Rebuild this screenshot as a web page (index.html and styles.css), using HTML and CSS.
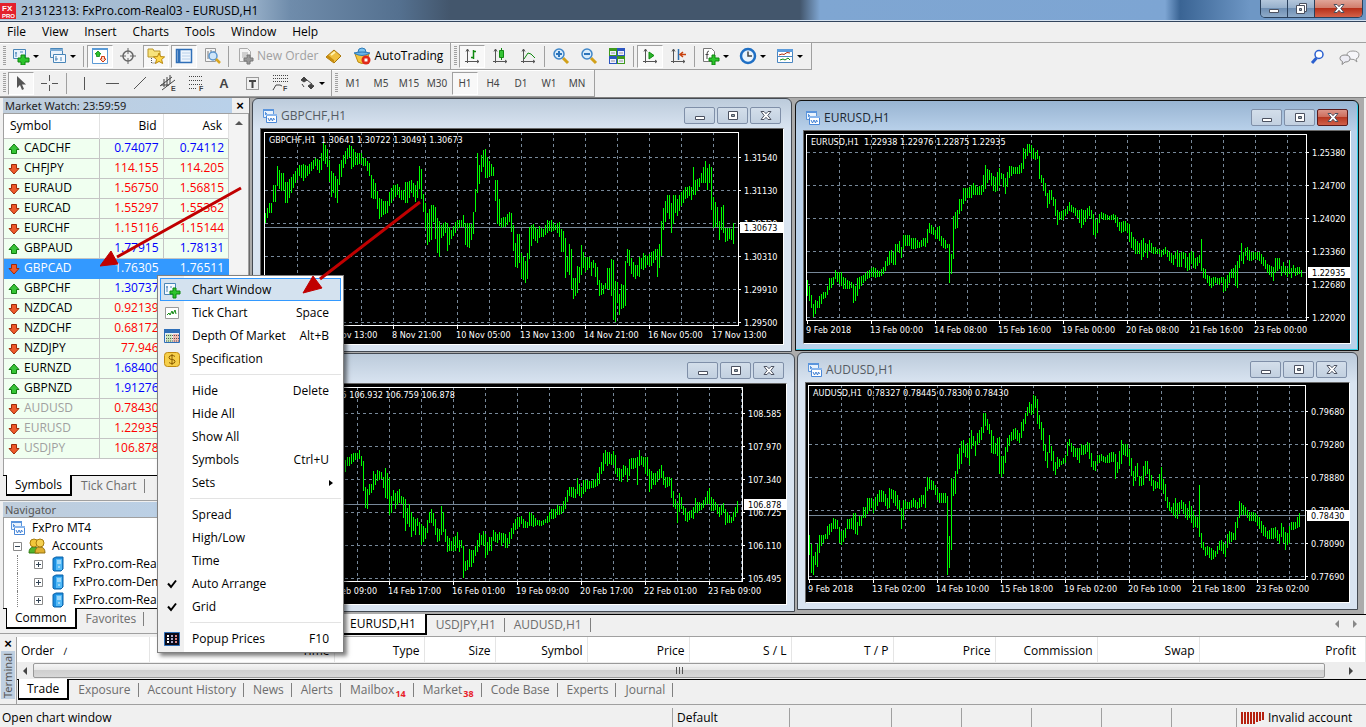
FILE: index.html
```html
<!DOCTYPE html>
<html lang="en">
  <head>
    <meta charset="UTF-8" />
    <title>21312313: FxPro.com-Real03 - EURUSD,H1</title>
    <link rel="stylesheet" href="styles.css">
  </head>
  <body>
    <svg class="sprite" aria-hidden="true">
      <symbol id="up" viewBox="0 0 12 12"><path d="M6 1 11 6.5H8.500V10.500H3.500V6.500H1Z" fill="#35c435" stroke="#117a11"/></symbol>
      <symbol id="down" viewBox="0 0 12 12"><path d="M6 11 11 5.500H8.500V1.500H3.500V5.500H1Z" fill="#ee5a2a" stroke="#a02a08"/></symbol>
      <symbol id="windows" viewBox="0 0 16 16"><path d="M1.500 1.500h10v8h-10z" fill="#eaf3fd" stroke="#5b95dc"/><path d="M1 2h11" stroke="#5b95dc" stroke-width="2"/><path d="M3.500 4v3M3 5.500h2" stroke="#5b95dc"/><path d="M4.500 6.500h10v8h-10z" fill="#fff" stroke="#4a88d8"/><path d="M4 7h11" stroke="#8ab6ec" stroke-width="2"/><path d="m6 10 1.500 3 1.500-3 1.500 3 1-3 1 2" fill="none" stroke="#3f7fd4"/></symbol>
      <symbol id="min" viewBox="0 0 14 12"><path d="M2.500 6.500h9v3h-9z" fill="#fff" stroke="#4b5160"/></symbol>
      <symbol id="max" viewBox="0 0 14 12"><path d="M2.500 1.500h9v8h-9z" fill="#fff" stroke="#4b5160"/><path d="M5.500 4.500h3v2h-3z" fill="#9aa" stroke="#4b5160"/></symbol>
      <symbol id="close" viewBox="0 0 14 12"><path d="M2 1.500h3l2 2.200 2-2.200h3L8.800 5.500 12 9.500H9L7 7.300 5 9.500H2L5.200 5.500Z" fill="#fff" stroke="#4b5160"/></symbol>
      <symbol id="server" viewBox="0 0 16 16"><path d="M3 2.500 6 1h7v12l-2 2H4l-1-1Z" fill="#1c8ee0" stroke="#0b62a8"/><path d="M6 3h6v11H6z" fill="#52b9f6"/><path d="M7 5h4M7 7h4M8 11h2" stroke="#e6f6ff"/></symbol>
      <symbol id="plusbox" viewBox="0 0 9 9"><path d="M.5.5h8v8h-8z" fill="#fff" stroke="#8a8a8a"/><path d="M2 4.500h5M4.500 2v5" stroke="#345"/></symbol>
      <symbol id="plot" viewBox="0 0 18 18"><path d="M4.500 2v14M2 14.500h14M3 4.500 4.500 2 6 4.500M14 13l2 1.500-2 1.500" fill="none" stroke="#555"/></symbol>
      <symbol id="check" viewBox="0 0 10 10"><path d="m1 4.500 3 3.500 5-6.500" fill="none" stroke="#000" stroke-width="2"/></symbol>
    </svg>

    <header class="titlebar">
      <svg class="app-logo" viewBox="0 0 16 16"><path d="M0 0h16v16H0z" fill="#e3202c"/><text x="2" y="8">FX</text><text x="2" y="15" class="logo-small">PRO</text></svg>
      <span class="app-title">21312313: FxPro.com-Real03 - EURUSD,H1</span>
      <div class="caption-buttons">
        <button aria-label="Minimize"><svg><use href="#min"/></svg></button>
        <button aria-label="Restore"><svg viewBox="0 0 14 12"><path d="M5.500.5h7v8h-7z" fill="#fff" stroke="#4b5160"/><path d="M2.500 2.500h8v8h-8z" fill="#fff" stroke="#4b5160"/><path d="M5.500 5.500h2v2h-2z" fill="#9aa" stroke="#4b5160"/></svg></button>
        <button class="close" aria-label="Close"><svg><use href="#close"/></svg></button>
      </div>
    </header>

    <nav class="menubar">
      <a href="#">File</a><a href="#">View</a><a href="#">Insert</a><a href="#">Charts</a><a href="#">Tools</a><a href="#">Window</a><a href="#">Help</a>
    </nav>

    <div class="toolbars">
      <div class="toolbar-row">
        <div class="toolbar">
          <i class="grip"></i>
          <button class="drop" aria-label="New chart"><svg viewBox="0 0 18 18"><path d="M1.500 2.500h12v9h-12z" fill="#e9f2fb" stroke="#4a86b8"/><path d="M4 5v5M3 6h2M8 5h3" stroke="#4a86b8"/><path d="M9 8h4v3h4v4h-4v3H9v-3H6v-4h3Z" fill="#2cc42c" stroke="#0d860d"/></svg></button>
          <button class="drop" aria-label="Profiles"><svg viewBox="0 0 18 18"><path d="M1.500 1.500h12v9h-12z" fill="#e9f2fb" stroke="#4a86b8"/><path d="M1 3h13" stroke="#7bacd6" stroke-width="2"/><path d="M4.500 7.500h12v8h-12z" fill="#f4f9ff" stroke="#4a86b8"/><path d="M7 9v5M6 12h3M12 10v4" stroke="#4a86b8"/></svg></button>
          <i class="sep"></i>
          <button class="on" aria-label="Market watch"><svg viewBox="0 0 18 18"><path d="M1.500 1.500h15v15h-15z" fill="#fff" stroke="#5a9ad6"/><path d="M1 2h16" stroke="#5a9ad6" stroke-width="2"/><path d="m7 4 3 3H8.500v2.500h-3V7H4Z" fill="#2cc42c" stroke="#0d860d" stroke-width=".8"/><path d="m12 15 3-3h-1.500V9.500h-3V12H9Z" fill="#fbd4c4" stroke="#d03c10"/></svg></button>
          <button aria-label="Data window"><svg viewBox="0 0 18 18"><circle cx="9" cy="9" r="5" fill="none" stroke="#666" stroke-width="1.500"/><path d="M9 1v6M9 11v6M1 9h6M11 9h6" stroke="#666"/></svg></button>
          <button class="on" aria-label="Navigator"><svg viewBox="0 0 18 18"><path d="M1 3V2h5l1 2h6v6H1z" fill="#f7e37c" stroke="#b9962a"/><path d="M4.500 11v5h4" stroke="#555" stroke-dasharray="1 1" fill="none"/><path d="m12 6 1.600 3.600 4 .3-3 2.600 1 4-3.600-2.100L8.500 16.500l1-4-3-2.600 4-.3Z" fill="#ffd84a" stroke="#b8860b"/></svg></button>
          <button class="on" aria-label="Terminal"><svg viewBox="0 0 18 18"><path d="M1.500 2.500h15v13h-15z" fill="#eef5fd" stroke="#2f6fb8" stroke-width="1.500"/><path d="M4 3v12" stroke="#2f6fb8" stroke-width="3"/><path d="M7 6h8M7 9h8M7 12h8" stroke="#b9d0ea"/></svg></button>
          <button aria-label="Strategy tester"><svg viewBox="0 0 18 18"><path d="M2.500 1.500h10v13h-10z" fill="#f5f5f5" stroke="#999"/><path d="M5 4v8M8 3v8M11 4v5" stroke="#777"/><circle cx="10" cy="9" r="4" fill="#cfe6fa" stroke="#5d97cf" stroke-width="1.500"/><path d="m13 12 4 4" stroke="#d9a520" stroke-width="2.500"/></svg></button>
          <i class="sep"></i>
          <button class="wide muted"><svg viewBox="0 0 18 18"><path d="M2.500 1.500h8l3 3v10h-11z" fill="#f4f4f4" stroke="#aaa"/><path d="M5 6h6M5 8h6M5 10h4" stroke="#aaa"/><path d="M10 8h3v3h3v3h-3v3h-3v-3H7v-3h3Z" fill="#999" stroke="#777"/></svg>New Order</button>
          <button aria-label="MetaEditor"><svg viewBox="0 0 18 18"><path d="m2 10 8-7 7 6-7 7Z" fill="#f0c040" stroke="#a87408"/><path d="m2 10 8 6v-3L4 8Z" fill="#c88d10"/><path d="m7 8 4-3" stroke="#fff3b0" stroke-width="2"/></svg></button>
          <button class="wide auto"><svg viewBox="0 0 18 18"><path d="M2 7 5 15q4 3 8 0l3-8Z" fill="#f4c63c" stroke="#bb8a14"/><path d="M1 6q8-3 16 0-8 5-16 0Z" fill="#69b4e8" stroke="#2e7bb8"/><path d="M5 5q0-4 4-4t4 4Z" fill="#7cc3f0" stroke="#2e7bb8"/><circle cx="13" cy="13" r="4.500" fill="#e02a1a"/><path d="M11.500 11.500h3v3h-3z" fill="#fff"/></svg>AutoTrading</button>
        </div>
        <div class="toolbar">
          <i class="grip"></i>
          <button class="on" aria-label="Bar chart"><svg viewBox="0 0 18 18"><use href="#plot"/><path d="M10.500 3v9M8 10.500h2M11 4.500h2" stroke="#118a11" stroke-width="1.500"/></svg></button>
          <button aria-label="Candlesticks"><svg viewBox="0 0 18 18"><use href="#plot"/><path d="M10.500 1v12" stroke="#118a11"/><path d="M8.500 3.500h4v7h-4z" fill="#35c435" stroke="#118a11"/></svg></button>
          <button aria-label="Line chart"><svg viewBox="0 0 18 18"><use href="#plot"/><path d="m5 12 4-6 3 1 4 4" fill="none" stroke="#118a11"/></svg></button>
          <i class="sep"></i>
          <button aria-label="Zoom in"><svg viewBox="0 0 18 18"><path d="m11 11 5 5" stroke="#d2a11a" stroke-width="3"/><circle cx="7" cy="7" r="5" fill="#d8ecfb" stroke="#3f86c8" stroke-width="1.500"/><path d="M4 7h6M7 4v6" stroke="#2d74ba" stroke-width="2"/></svg></button>
          <button aria-label="Zoom out"><svg viewBox="0 0 18 18"><path d="m11 11 5 5" stroke="#d2a11a" stroke-width="3"/><circle cx="7" cy="7" r="5" fill="#d8ecfb" stroke="#3f86c8" stroke-width="1.500"/><path d="M4 7h6" stroke="#2d74ba" stroke-width="2"/></svg></button>
          <button aria-label="Tile windows"><svg viewBox="0 0 18 18"><path d="M1 1h8v8H1zM9 9h8v8H9z" fill="#3f9a1c"/><path d="M9 1h8v8H9zM1 9h8v8H1z" fill="#2b55c0"/><path d="M2 4h6v4H2zM10 4h6v4h-6zM2 12h6v4H2zM10 12h6v4h-6z" fill="#eef"/><path d="M3 6h4M11 6h4M3 14h4M11 14h4" stroke="#999"/></svg></button>
          <i class="sep"></i>
          <button class="on" aria-label="Auto scroll"><svg viewBox="0 0 18 18"><use href="#plot"/><path d="m8 5 5 3.500L8 12Z" fill="#2ab52a" stroke="#118a11"/></svg></button>
          <button aria-label="Chart shift"><svg viewBox="0 0 18 18"><use href="#plot"/><path d="M9.500 2v11" stroke="#2d6fae" stroke-width="1.500"/><path d="M17 7.500h-5M14 5l-3 2.500L14 10" fill="none" stroke="#c8400c" stroke-width="1.500"/></svg></button>
          <i class="sep"></i>
          <button class="drop" aria-label="Indicators"><svg viewBox="0 0 18 18"><path d="M1.500 1.500h8l3 3v10h-11z" fill="#fff" stroke="#777"/><path d="M7 4q-2 0-2 3v5M3.500 7.500h3" stroke="#444" fill="none"/><path d="M10 8h3v3h4v3h-4v4h-3v-4H7v-3h3Z" fill="#2cc42c" stroke="#0d860d"/></svg></button>
          <button class="drop" aria-label="Periods"><svg viewBox="0 0 18 18"><circle cx="9" cy="9" r="7" fill="#eaf4fd" stroke="#1f6fc4" stroke-width="2.500"/><path d="M9 4.500V9h4" fill="none" stroke="#444" stroke-width="1.500"/></svg></button>
          <button class="drop" aria-label="Templates"><svg viewBox="0 0 18 18"><path d="M1.500 2.500h15v13h-15z" fill="#fff" stroke="#4a86c0"/><path d="M1 3.500h16" stroke="#5c9cdc" stroke-width="3"/><path d="M2 9.500h14" stroke="#4a86c0"/><path d="m3 8 3-1 2 .5 3-2 3 .5" fill="none" stroke="#b03010"/><path d="m4 13 3-1 2 1 3-2 2 2" fill="none" stroke="#118a11"/></svg></button>
        </div>
        <div class="search-tools">
          <button aria-label="Search"><svg viewBox="0 0 18 18"><path d="m3 15 4.500-5" stroke="#2a5fcf" stroke-width="3"/><circle cx="10" cy="6.500" r="4" fill="#fff" stroke="#2a5fcf" stroke-width="1.500"/></svg></button>
          <button aria-label="Chat"><svg class="chat" viewBox="0 0 22 18"><path d="M14 3q6 0 6 4 0 3-3 4l1 3-3-2.500q-7 0-7-4.500 0-4 6-4Z" fill="#f6f6fa" stroke="#999"/><path d="M6 7q5 0 5 3.500T6 14l-3 2.500.5-3Q1 12.500 1 10.500 1 7 6 7Z" fill="#ececf4" stroke="#888"/></svg></button>
        </div>
      </div>
      <div class="toolbar-row">
        <div class="toolbar drawing">
          <i class="grip"></i>
          <button class="on" aria-label="Cursor"><svg viewBox="0 0 18 18"><path d="M5 2v12l3-3 2 5 2-1-2-4.500h4Z" fill="#555"/></svg></button>
          <button aria-label="Crosshair"><svg viewBox="0 0 18 18"><path d="M9.500 1v6M9.500 11v6M1 9.500h6M12 9.500h6" stroke="#555"/></svg></button>
          <i class="sep"></i>
          <button aria-label="Vertical line"><svg viewBox="0 0 18 18"><path d="M9.500 3v13" stroke="#555"/></svg></button>
          <button aria-label="Horizontal line"><svg viewBox="0 0 18 18"><path d="M3 9.500h13" stroke="#555"/></svg></button>
          <button aria-label="Trendline"><svg viewBox="0 0 18 18"><path d="M3 15 15 3" stroke="#555"/></svg></button>
          <button aria-label="Channel"><svg viewBox="0 0 18 18"><path d="m1 12 12-9M3 16 16 6M5 5v8M8 3v9M11 1v9M2 11h8" stroke="#444" fill="none"/><text x="12" y="17">E</text></svg></button>
          <button aria-label="Fibonacci"><svg viewBox="0 0 18 18"><path d="M2 2.500h14M2 6.500h14M2 10.500h14M2 14.500h8" stroke="#444" stroke-dasharray="1 1"/><text x="12" y="17">F</text></svg></button>
          <button class="letter">A</button>
          <button aria-label="Text label"><svg viewBox="0 0 18 18"><path d="M3.500 3.500h12v12h-12z" fill="none" stroke="#444" stroke-dasharray="1 1"/><path d="M6 7h7M9.500 7v7" stroke="#444" stroke-width="2"/></svg></button>
          <button aria-label="Fibonacci arcs"><svg viewBox="0 0 18 18"><path d="M2 1.500h15M2 4.500h15M2 7.500h15" stroke="#444" stroke-dasharray="1 1"/><path d="m2 16 3-5h4l2 1" stroke="#444" fill="none"/><text x="12" y="17">F</text></svg></button>
          <button class="drop" aria-label="Arrows"><svg viewBox="0 0 18 18"><path d="m6 3 3 3-3 2-3-2ZM13 10l3 2-3 3-3-3Z" fill="#444" stroke="#444"/><path d="m4 10 2 3M9 6l5 4" stroke="#444"/></svg></button>
        </div>
        <div class="toolbar periods">
          <i class="grip"></i>
          <button>M1</button><button>M5</button><button>M15</button><button>M30</button><button class="on">H1</button><button>H4</button><button>D1</button><button>W1</button><button>MN</button>
        </div>
      </div>
    </div>

    <div class="main">
      <aside class="sidebar">
        <section class="panel market">
          <div class="panel-head"><h2>Market Watch: 23:59:59</h2><button aria-label="Close">×</button></div>
          <div class="market-body">
            <table class="quotes">
              <thead><tr><th>Symbol</th><th>Bid</th><th>Ask</th></tr></thead>
              <tbody>
                <tr class="rise"><td><svg><use href="#up"/></svg>CADCHF</td><td>0.74077</td><td>0.74112</td></tr>
                <tr><td><svg><use href="#down"/></svg>CHFJPY</td><td>114.155</td><td>114.205</td></tr>
                <tr><td><svg><use href="#down"/></svg>EURAUD</td><td>1.56750</td><td>1.56815</td></tr>
                <tr><td><svg><use href="#down"/></svg>EURCAD</td><td>1.55297</td><td>1.55362</td></tr>
                <tr><td><svg><use href="#down"/></svg>EURCHF</td><td>1.15116</td><td>1.15144</td></tr>
                <tr class="rise"><td><svg><use href="#up"/></svg>GBPAUD</td><td>1.77915</td><td>1.78131</td></tr>
                <tr class="selected"><td><svg><use href="#down"/></svg>GBPCAD</td><td>1.76305</td><td>1.76511</td></tr>
                <tr class="rise"><td><svg><use href="#up"/></svg>GBPCHF</td><td>1.30737</td><td></td></tr>
                <tr><td><svg><use href="#down"/></svg>NZDCAD</td><td>0.92139</td><td></td></tr>
                <tr><td><svg><use href="#down"/></svg>NZDCHF</td><td>0.68172</td><td></td></tr>
                <tr><td><svg><use href="#down"/></svg>NZDJPY</td><td>77.946</td><td></td></tr>
                <tr class="rise"><td><svg><use href="#up"/></svg>EURNZD</td><td>1.68400</td><td></td></tr>
                <tr class="rise"><td><svg><use href="#up"/></svg>GBPNZD</td><td>1.91276</td><td></td></tr>
                <tr class="off"><td><svg><use href="#down"/></svg>AUDUSD</td><td>0.78430</td><td></td></tr>
                <tr class="off"><td><svg><use href="#down"/></svg>EURUSD</td><td>1.22935</td><td></td></tr>
                <tr class="off"><td><svg><use href="#down"/></svg>USDJPY</td><td>106.878</td><td></td></tr>
              </tbody>
            </table>
            <div class="scroll-strip"><svg viewBox="0 0 8 5"><path d="M0 5 4 1l4 4Z" fill="#555"/></svg></div>
          </div>
          <div class="tabs"><button class="active">Symbols</button><button>Tick Chart</button></div>
        </section>
        <section class="panel navigator">
          <div class="panel-head"><h2>Navigator</h2><button aria-label="Close">×</button></div>
          <ul class="tree">
            <li><svg><use href="#windows"/></svg>FxPro MT4</li>
            <li class="level1"><svg class="box" viewBox="0 0 9 9"><path d="M.5.5h8v8h-8z" fill="#fff" stroke="#8a8a8a"/><path d="M2 4.500h5" stroke="#345"/></svg><svg class="people" viewBox="0 0 18 16"><path d="M1 15q0-6 5-6 5 0 5 6Z" fill="#53b42c" stroke="#2d7a12"/><circle cx="6" cy="5" r="4" fill="#f0c63a" stroke="#a87c0c"/><path d="M7 15q0-6 5-6 5 0 5 6Z" fill="#e0b030" stroke="#94700c"/><circle cx="12" cy="5" r="4" fill="#f4d050" stroke="#a87c0c"/></svg>Accounts</li>
            <li class="level2"><svg class="box"><use href="#plusbox"/></svg><svg><use href="#server"/></svg>FxPro.com-Real03</li>
            <li class="level2"><svg class="box"><use href="#plusbox"/></svg><svg><use href="#server"/></svg>FxPro.com-Demo03</li>
            <li class="level2"><svg class="box"><use href="#plusbox"/></svg><svg><use href="#server"/></svg>FxPro.com-Real04</li>
          </ul>
          <div class="tabs"><button class="active">Common</button><button>Favorites</button></div>
        </section>
      </aside>

      <main class="workspace">
        <div class="desktop">
          <article class="window gbpchf">
            <div class="window-title"><svg class="doc"><use href="#windows"/></svg><span>GBPCHF,H1</span><button aria-label="Minimize"><svg><use href="#min"/></svg></button><button aria-label="Maximize"><svg><use href="#max"/></svg></button><button aria-label="Close"><svg><use href="#close"/></svg></button></div>
            <svg class="chart" id="gbpchf"></svg>
          </article>
          <article class="window usdjpy">
            <div class="window-title"><svg class="doc"><use href="#windows"/></svg><span>USDJPY,H1</span><button aria-label="Minimize"><svg><use href="#min"/></svg></button><button aria-label="Maximize"><svg><use href="#max"/></svg></button><button aria-label="Close"><svg><use href="#close"/></svg></button></div>
            <svg class="chart" id="usdjpy"></svg>
          </article>
          <article class="window audusd">
            <div class="window-title"><svg class="doc"><use href="#windows"/></svg><span>AUDUSD,H1</span><button aria-label="Minimize"><svg><use href="#min"/></svg></button><button aria-label="Maximize"><svg><use href="#max"/></svg></button><button aria-label="Close"><svg><use href="#close"/></svg></button></div>
            <svg class="chart" id="audusd"></svg>
          </article>
          <article class="window eurusd focused">
            <div class="window-title"><svg class="doc"><use href="#windows"/></svg><span>EURUSD,H1</span><button aria-label="Minimize"><svg><use href="#min"/></svg></button><button aria-label="Maximize"><svg><use href="#max"/></svg></button><button class="close" aria-label="Close"><svg><use href="#close"/></svg></button></div>
            <svg class="chart" id="eurusd"></svg>
          </article>
        </div>
        <div class="tabs chart-tabs">
          <button>GBPCHF,H1</button><button class="active">EURUSD,H1</button><button>USDJPY,H1</button><button>AUDUSD,H1</button>
          <svg class="tab-arrows" viewBox="0 0 24 8"><path d="M5 0v8L1 4ZM19 0v8l4-4Z" fill="#888"/></svg>
        </div>
      </main>
    </div>

    <section class="terminal">
      <div class="terminal-side"><button aria-label="Close">×</button><h2>Terminal</h2></div>
      <div class="terminal-body">
        <table class="orders">
          <colgroup><col class="c-order"><col class="c-time"><col class="c-type"><col class="c-size"><col class="c-symbol"><col class="c-price"><col class="c-price"><col class="c-price"><col class="c-price"><col class="c-price"><col class="c-price"><col></colgroup>
          <thead><tr><th>Order &nbsp; <small>∕</small></th><th>Time</th><th>Type</th><th>Size</th><th>Symbol</th><th>Price</th><th>S / L</th><th>T / P</th><th>Price</th><th>Commission</th><th>Swap</th><th>Profit</th></tr></thead>
        </table>
        <div class="hscroll">
          <svg viewBox="0 0 5 8"><path d="M5 0v8L1 4Z" fill="#444"/></svg>
          <div class="thumb"><i></i><i></i><i></i></div>
          <svg viewBox="0 0 5 8"><path d="M0 0v8l4-4Z" fill="#444"/></svg>
        </div>
        <div class="tabs">
          <button class="active">Trade</button><button>Exposure</button><button>Account History</button><button>News</button><button>Alerts</button><button>Mailbox<b>14</b></button><button>Market<b>38</b></button><button>Code Base</button><button>Experts</button><button>Journal</button>
        </div>
      </div>
    </section>

    <footer class="statusbar">
      <span class="hint">Open chart window</span>
      <span class="profile">Default</span>
      <span class="s1"></span><span class="s2"></span><span class="s2"></span><span class="s2"></span><span class="s2"></span><span class="s3"></span>
      <span class="account"><svg viewBox="0 0 24 13"><path d="M1 1v12M4 1v12M7 1v12M10 1v12M13 1v12M16 1v10M19 1v9M22 1v8" stroke="#b5210f" stroke-width="2"/></svg>Invalid account</span>
    </footer>

    <div class="context-menu" role="menu">
      <button class="hot"><i><svg viewBox="0 0 18 18"><path d="M1.500 2.500h11v11h-11z" fill="#f4f9ff" stroke="#4a86b8"/><path d="M4 5v6M3 6h2M8 5v2" stroke="#4a86b8"/><path d="M10 7h3v3h4v3h-4v4h-3v-4H7v-3h3Z" fill="#2cc42c" stroke="#0d860d"/></svg></i>Chart Window</button>
      <button><i><svg viewBox="0 0 18 18"><path d="M2.500 3.500h13v11h-13z" fill="#fff" stroke="#999"/><path d="m4 11 2-2 1 2 2-4 1 3 2-4 1 4" fill="none" stroke="#118a11"/></svg></i>Tick Chart<kbd>Space</kbd></button>
      <button><i><svg viewBox="0 0 18 18"><path d="M1.500 2.500h15v13h-15z" fill="#e8eef8" stroke="#2f6fb8"/><path d="M1 4h16" stroke="#2f6fb8" stroke-width="4"/><path d="M3 7h6v8H3z" fill="#c8e6b8"/><path d="M10 7h6v8h-6z" fill="#f0b8b0"/><path d="M3 8.500h13M3 11.500h13M3 14h13" stroke="#555" stroke-dasharray="1 1"/></svg></i>Depth Of Market<kbd>Alt+B</kbd></button>
      <button><i><svg viewBox="0 0 18 18"><rect x="1.500" y="2.500" width="15" height="14" rx="3" fill="#f6cf4a" stroke="#c08a10"/><path d="M12 6.500q-1-1-3-1-3 0-3 2t3 2q3 0 3 2t-3 2q-2 0-3-1M9 4v11" fill="none" stroke="#8a5c00"/></svg></i>Specification</button>
      <hr>
      <button><i></i>Hide<kbd>Delete</kbd></button>
      <button><i></i>Hide All</button>
      <button><i></i>Show All</button>
      <button><i></i>Symbols<kbd>Ctrl+U</kbd></button>
      <button><i></i>Sets<svg class="more" viewBox="0 0 4 6"><path d="M0 0v6l4-3Z"/></svg></button>
      <hr>
      <button><i></i>Spread</button>
      <button><i></i>High/Low</button>
      <button><i></i>Time</button>
      <button><i><svg class="tick"><use href="#check"/></svg></i>Auto Arrange</button>
      <button><i><svg class="tick"><use href="#check"/></svg></i>Grid</button>
      <hr>
      <button><i><svg viewBox="0 0 18 18"><path d="M1.500 2.500h15v13h-15z" fill="#0a0a18" stroke="#2f6fb8"/><path d="M5 5v9" stroke="#fff" stroke-width="2" stroke-dasharray="2 1"/><path d="M9 5v9" stroke="#aac" stroke-width="2" stroke-dasharray="2 1"/><path d="M13 5v9" stroke="#d88" stroke-width="2" stroke-dasharray="2 1"/></svg></i>Popup Prices<kbd>F10</kbd></button>
    </div>

    <svg class="callouts" viewBox="0 0 330 120">
      <path d="M141 10 17 79M320 24 220 101" stroke="#c00000" stroke-width="3"/>
      <path d="m0 88 11-15 7 13ZM203 115l10-17 9 12Z" fill="#c00000" stroke="#c00000"/>
    </svg>

    <script src="charts.js"></script>
  </body>
</html>
```
FILE: styles.css
```css
* {
  box-sizing: border-box;
}

body {
  margin: 0;
  height: 100vh;
  display: flex;
  flex-direction: column;
  position: relative;
  overflow: hidden;
  background: #f0f0f0;
  color: #000;
  font-family: "Open Sans", "Segoe UI", sans-serif;
  font-size: 12px;
  line-height: 16px;
}

button {
  padding: 0;
  border: 0;
  background: none;
  color: inherit;
  font: inherit;
}

h2 {
  margin: 0;
  font: 11px "Noto Sans", Tahoma, sans-serif;
}

svg {
  flex: none;
}

.sprite {
  position: absolute;
  width: 0;
  height: 0;
}

/* title bar */
.titlebar {
  height: 22px;
  display: flex;
  align-items: center;
  border-bottom: 1px solid #33445c;
  box-shadow: inset 0 -1px #d5e2f0;
  background: linear-gradient(90deg, #a9bfd4 0, #a3bad1 240px, #6f8cab 290px, #54708f 400px, #43566c 450px, #43566c 800px, #7fa6d2 820px, #7da5d3 1165px, #3a6494 1180px, #6e97c5 1250px);
}

.app-logo {
  width: 16px;
  height: 16px;
}

.app-logo text {
  font: 700 8px "Liberation Sans", sans-serif;
  fill: #fff;
}

.app-logo .logo-small {
  font-size: 6px;
}

.app-title {
  margin-left: 5px;
}

.caption-buttons {
  display: flex;
  align-self: flex-start;
  height: 18px;
  margin-left: auto;
  margin-right: 3px;
  border: 1px solid #29405c;
  border-top: 0;
  border-radius: 0 0 5px 5px;
  overflow: hidden;
}

.caption-buttons button {
  width: 27px;
  display: flex;
  align-items: center;
  justify-content: center;
  border-right: 1px solid #29405c;
  background: linear-gradient(#b4c7dc, #94aeca 50%, #6f8fb3 50%, #8fabc9);
}

.caption-buttons .close {
  width: 47px;
  border-right: 0;
  background: linear-gradient(#e0a598, #d07a68 50%, #b7301a 50%, #d4624a);
}

.caption-buttons svg,
.window-title button svg {
  width: 14px;
  height: 12px;
}

/* menu */
.menubar {
  height: 21px;
  display: flex;
  align-items: center;
  gap: 16px;
  padding-left: 7px;
  border-bottom: 1px solid #a0a0a0;
}

.menubar a {
  color: #000;
  text-decoration: none;
}

/* toolbars */
.toolbars {
  border-bottom: 1px solid #808080;
}

.toolbar-row {
  height: 27px;
  display: flex;
}

.toolbar {
  display: flex;
  align-items: center;
  padding: 0 3px;
  border-right: 1px solid #a0a0a0;
  border-bottom: 1px solid #a0a0a0;
  box-shadow: inset 0 1px #fff;
}

.grip {
  width: 3px;
  height: 20px;
  margin-right: 1px;
  background: repeating-linear-gradient(#a0a0a0 0 1px, #f0f0f0 1px 2px);
}

.sep {
  width: 1px;
  height: 21px;
  margin: 0 2px;
  background: #a0a0a0;
}

.drawing .sep {
  margin: 0 3px;
}

.toolbar button {
  width: 26px;
  height: 23px;
  margin: 0 1px;
  display: flex;
  align-items: center;
  justify-content: center;
  color: #444;
}

.toolbar svg,
.search-tools svg {
  width: 18px;
  height: 18px;
}

.toolbar svg text {
  font: 700 7px "Liberation Sans", sans-serif;
  fill: #444;
}

.toolbar .on {
  border: 1px solid;
  border-color: #a0a0a0 #fff #fff #a0a0a0;
  background: #f8f8f8;
}

.toolbar .drop {
  width: 35px;
  gap: 3px;
}

.drawing .drop {
  width: 32px;
}

.drop::after {
  content: "";
  border: 3px solid transparent;
  border-top-color: #000;
  border-bottom: 0;
}

.toolbar .wide {
  width: auto;
  padding-left: 5px;
  gap: 2px;
}

.toolbar .muted {
  color: #a0a0a0;
}

.toolbar .auto {
  color: #000;
  gap: 3px;
  padding-right: 3px;
}

.toolbar .letter {
  font: 700 13px "Liberation Sans", sans-serif;
}

.periods button {
  font: 10px "Noto Sans", Tahoma, sans-serif;
}

.search-tools {
  display: flex;
  align-items: center;
  gap: 12px;
  margin-left: auto;
  padding-right: 5px;
}

.search-tools button {
  height: 18px;
}

.search-tools .chat {
  width: 22px;
}

/* side panels */
.main {
  flex: 1;
  min-height: 0;
  display: flex;
}

.sidebar {
  width: 249px;
  display: flex;
  flex-direction: column;
  padding-bottom: 3px;
}

.panel {
  display: flex;
  flex-direction: column;
  padding-left: 3px;
  border-bottom: 1px solid #a0a0a0;
}

.market {
  height: 403px;
}

.navigator {
  flex: 1;
  min-height: 0;
  padding-top: 1px;
}

.panel-head {
  display: flex;
  justify-content: space-between;
  padding-right: 3px;
}

.panel-head h2 {
  width: 229px;
  height: 15px;
  padding-left: 2px;
  line-height: 15px;
  background: linear-gradient(90deg, #bfcddb, #b9d1ea);
  color: #222;
}

.navigator h2 {
  color: #555;
}

.panel-head button,
.terminal-side button {
  width: 12px;
  font: 700 13px/14px "Liberation Sans", sans-serif;
}

.market-body {
  flex: 1;
  min-height: 0;
  display: flex;
  border: 1px solid #a0a0a0;
  border-bottom: 0;
  background: #fff;
}

.quotes {
  width: 225px;
  align-self: flex-start;
  table-layout: fixed;
  border-collapse: collapse;
}

.quotes th {
  height: 24px;
  padding: 0 6px;
  border-right: 1px solid #e2e2e2;
  font-weight: 400;
  text-align: right;
}

.quotes th:first-child {
  width: 95px;
  text-align: left;
}

.quotes th:nth-child(2) {
  width: 64px;
}

.quotes td {
  height: 20px;
  padding: 0 4px;
  border: 1px solid #c4c4c4;
  border-left: 0;
  background: #f0fff0;
  color: #f00;
  text-align: right;
  line-height: 18px;
}

.quotes td:first-child {
  color: #000;
  text-align: left;
}

.quotes td svg {
  width: 12px;
  height: 12px;
  margin-right: 4px;
  vertical-align: -3px;
}

.quotes .rise td + td {
  color: #00f;
}

.quotes .off td:first-child {
  color: #a0a0a0;
}

.quotes .selected td,
.quotes .selected td:first-child {
  border-color: #3399ff;
  background: #3399ff;
  color: #fff;
}

.scroll-strip {
  flex: 1;
  padding-top: 6px;
  background: #f3f3f3;
  text-align: center;
}

.scroll-strip svg {
  width: 8px;
  height: 5px;
  display: block;
  margin: 0 auto;
}

.tabs {
  height: 25px;
  flex: none;
  display: flex;
  align-items: flex-start;
  padding-left: 3px;
  border-top: 1px solid #000;
  background: #f0f0f0;
  color: #6d6d6d;
}

.tabs button {
  height: 20px;
  padding: 0 8px 0 9px;
  position: relative;
}

.tabs button::after {
  content: "";
  position: absolute;
  right: 0;
  top: 3px;
  height: 14px;
  border-right: 1px solid #808080;
}

.tabs .active {
  margin-top: -1px;
  height: 21px;
  padding-left: 8px;
  border: 1px solid #000;
  border-top: 0;
  border-right-width: 2px;
  border-bottom-width: 2px;
  background: #fff;
  color: #000;
}

.tabs .active::after {
  display: none;
}

.tree {
  flex: 1;
  min-height: 0;
  margin: 0;
  padding: 1px 6px 0;
  border: 1px solid #a0a0a0;
  border-bottom: 0;
  background: #fff;
  list-style: none;
  overflow: hidden;
  white-space: nowrap;
}

.tree li {
  height: 18px;
  display: flex;
  align-items: center;
  gap: 6px;
}

.tree svg {
  width: 16px;
  height: 16px;
}

.tree .box {
  width: 9px;
  height: 9px;
}

.tree .people {
  width: 18px;
}

.tree .level1 {
  padding-left: 3px;
}

.tree .level2 {
  margin-left: 7px;
  padding-left: 16px;
  gap: 7px;
  border-left: 1px dotted #808080;
}

/* chart windows */
.workspace {
  flex: 1;
  min-width: 0;
  display: flex;
  flex-direction: column;
}

.desktop {
  flex: 1;
  position: relative;
  overflow: hidden;
  border-left: 1px solid #696969;
  border-right: 2px solid #f0f0f0;
  background: #ababab;
}

.window {
  position: absolute;
  display: flex;
  flex-direction: column;
  padding: 0 7px 6px;
  border: 1px solid #444a52;
  border-radius: 6px 6px 0 0;
  background: linear-gradient(#bccbdb, #d9e4f1 30px);
}

.window.focused {
  border-color: #111;
  box-shadow: inset -1px -1px #2fd0e8;
  background: linear-gradient(#98b4d2, #b9d1ea 30px);
}

.gbpchf { left: 2px; top: 0; width: 540px; height: 254px; }
.usdjpy { left: 2px; top: 255px; width: 543px; height: 259px; }
.eurusd { left: 545px; top: 2px; width: 564px; height: 251px; }
.audusd { left: 547px; top: 254px; width: 561px; height: 258px; }

.window-title {
  height: 29px;
  display: flex;
  align-items: center;
  gap: 2px;
  padding: 4px 3px 0 2px;
  color: #555b63;
}

.focused .window-title {
  color: #1c2733;
}

.window-title .doc {
  width: 16px;
  height: 16px;
}

.window-title span {
  flex: 1;
  padding-left: 1px;
}

.window-title button {
  width: 31px;
  height: 17px;
  display: flex;
  align-items: center;
  justify-content: center;
  border: 1px solid #7f8fa8;
  border-radius: 2px;
  background: linear-gradient(#d3deea, #c2d0e0);
}

.window-title .close {
  border-color: #5c1a1a;
  background: linear-gradient(#dc9488, #cc6a58 50%, #b73822 50%, #d0604a);
}

.chart {
  flex: 1;
  min-height: 0;
  width: 100%;
  border: 1px solid;
  border-color: #696969 #fff #fff #696969;
  background: #000;
  shape-rendering: crispEdges;
}

.chart text {
  font: 9px "DejaVu Sans Condensed", Tahoma, "Noto Sans", sans-serif;
  fill: #fff;
}

.chart .tag {
  fill: #000;
}

.chart-tabs {
  height: 23px;
  padding-left: 8px;
  border-bottom: 1px solid #a0a0a0;
}

.chart-tabs button,
.chart-tabs .active {
  padding: 0 9px;
}

.tab-arrows {
  width: 24px;
  height: 8px;
  margin: 5px 8px 0 auto;
}

/* terminal */
.terminal {
  display: flex;
  height: 68px;
  border-bottom: 1px solid #a0a0a0;
}

.terminal-side {
  width: 16px;
  display: flex;
  flex-direction: column;
  align-items: center;
  padding-bottom: 5px;
}

.terminal-side h2 {
  flex: 1;
  width: 14px;
  line-height: 14px;
  background: #bfcfe0;
  color: #555;
  text-align: center;
  writing-mode: vertical-rl;
  transform: rotate(180deg);
}

.terminal-body {
  flex: 1;
  min-width: 0;
  border-left: 1px solid #a0a0a0;
}

.orders {
  width: 100%;
  table-layout: fixed;
  border-collapse: collapse;
  background: #fff;
}

.orders th {
  height: 25px;
  padding: 2px 4px 0;
  border-right: 1px solid #e5e5e5;
  font-weight: 400;
  text-align: right;
}

.orders th:first-child {
  text-align: left;
}

.orders th:last-child {
  padding-right: 9px;
}

.c-order { width: 132px; }
.c-time { width: 185px; }
.c-type { width: 90px; }
.c-size { width: 71px; }
.c-symbol { width: 92px; }
.c-price { width: 102px; }

.hscroll {
  height: 17px;
  display: flex;
  align-items: center;
  gap: 6px;
  padding: 0 12px 0 5px;
  background: #ededed;
}

.hscroll svg {
  width: 5px;
  height: 8px;
}

.hscroll svg:last-child {
  margin-left: 18px;
}

.thumb {
  flex: 1;
  height: 15px;
  display: flex;
  align-items: center;
  justify-content: center;
  gap: 2px;
  border: 1px solid #999;
  border-radius: 2px;
  background: linear-gradient(#f5f5f5, #e6e6e6 50%, #cfcfcf 50%, #d8d8d8);
}

.thumb i {
  width: 1px;
  height: 7px;
  background: #555;
}

.terminal .tabs {
  padding-left: 1px;
}

.tabs b {
  padding-left: 1px;
  color: #e8202a;
  font-size: 9px;
  vertical-align: -3px;
  line-height: 9px;
}

/* status bar */
.statusbar {
  height: 22px;
  display: flex;
  padding-top: 3px;
  line-height: 20px;
}

.statusbar span {
  height: 19px;
  padding-left: 4px;
  border-left: 1px solid #a0a0a0;
}

.statusbar .hint {
  flex: 1;
  padding-left: 2px;
  border: 0;
}

.profile { width: 117px; }
.s1 { width: 102px; }
.s2 { width: 70px; }
.s3 { width: 65px; }

.account {
  width: 130px;
}

.account svg {
  width: 24px;
  height: 13px;
  margin-right: 3px;
  vertical-align: -2px;
}

/* popup menu */
.context-menu {
  position: absolute;
  left: 157px;
  top: 275px;
  width: 187px;
  padding: 2px;
  border: 1px solid #808080;
  background: linear-gradient(90deg, #f0f0f0 26px, #fff 26px);
  box-shadow: 3px 3px 4px rgba(0, 0, 0, 0.5);
}

.context-menu button {
  width: 100%;
  height: 23px;
  display: flex;
  align-items: center;
  padding: 0 11px 0 2px;
  border: 1px solid transparent;
  text-align: left;
}

.context-menu .hot {
  border-color: #3399ff;
  background: #d4e2ef;
}

.context-menu i {
  width: 29px;
  display: flex;
}

.context-menu svg {
  width: 18px;
  height: 18px;
}

.context-menu .tick {
  width: 10px;
  height: 10px;
  margin-left: 4px;
}

.context-menu .more {
  width: 4px;
  height: 6px;
  margin-left: auto;
  margin-right: -4px;
}

.context-menu kbd {
  margin-left: auto;
  font: inherit;
}

.context-menu hr {
  height: 1px;
  margin: 4px 0 4px 30px;
  border: 0;
  background: #e3e3e3;
}

.callouts {
  position: absolute;
  left: 100px;
  top: 178px;
  width: 330px;
  height: 120px;
  pointer-events: none;
}
```
FILE: charts.js
```js
// points: x, high, low of the bars, measured from "from" and divided by "unit"
const charts = [
  {
    id: "gbpchf",
    view: [261, 129],
    plot: { left: 265, top: 132, right: 738, bottom: 325 },
    header: "GBPCHF,H1  1.30641 1.30722 1.30491 1.30673",
    prices: ["1.31540", "1.31130", "1.30720", "1.30310", "1.29910", "1.29500"],
    firstPrice: 157,
    last: ["1.30673", 227],
    dates: ["6 Nov 2017", "7 Nov 13:00", "8 Nov 21:00", "10 Nov 05:00", "13 Nov 13:00", "14 Nov 21:00", "16 Nov 05:00", "17 Nov 13:00"],
    from: [250, 95],
    unit: [3, 3],
    points: "45,355,380;57,325,350;75,270,318;82,213,270;94,235,285;112,260,322;124,245,290;136,228,262;148,210,240;160,208,254;172,212,240;184,200,225;196,190,210;208,195,232;214,175,222;220,140,195;232,162,212;244,228,303;250,235,290;262,252,322;268,208,268;280,180,215;292,158,190;300,150,183;304,152,218;316,170,208;328,175,205;346,190,210;358,203,240;364,240,305;376,265,310;388,308,370;400,318,357;412,318,352;418,290,330;430,270,310;442,268,298;454,285,312;472,262,320;484,255,290;496,270,318;502,258,305;508,212,280;514,222,308;520,297,348;526,325,400;532,355,446;544,330,432;550,330,378;556,335,430;562,370,470;568,378,482;574,390,425;586,380,412;592,385,466;604,405,428;616,380,412;622,375,398;634,375,393;640,360,392;646,385,448;658,385,455;664,388,432;670,350,415;676,283,348;682,175,290;688,210,265;694,180,228;700,165,212;706,162,245;712,185,245;718,197,240;730,215,240;736,255,315;742,255,385;754,368,395;766,365,393;778,350,378;784,355,408;790,390,465;796,445,512;802,418,517;808,418,500;814,475,545;826,497,560;832,475,548;838,397,488;844,390,450;850,388,430;862,402,440;868,393,425;880,402,422;892,375,410;898,377,405;904,375,408;916,390,402;928,380,422;934,403,467;940,407,467;946,430,545;952,485,528;958,447,537;964,462,578;970,550,608;976,548,600;982,512,590;988,515,560;994,450,538;1000,470,515;1006,485,527;1018,485,517;1024,500,540;1030,495,515;1042,515,568;1048,555,600;1060,570,595;1066,563,580;1072,518,580;1078,520,583;1084,492,600;1090,495,672;1096,558,678;1102,562,620;1108,597,657;1114,567,638;1120,570,635;1126,497,630;1132,462,500;1138,465,510;1144,490,535;1156,510,548;1162,510,540;1168,485,543;1174,490,520;1180,475,522;1192,483,508;1204,472,510;1216,462,492;1222,462,543;1228,447,517;1234,378,480;1240,338,402;1252,300,352;1258,300,370;1264,325,410;1270,300,385;1276,300,350;1282,312,360;1294,290,330;1306,277,310;1318,272,300;1324,275,312;1330,215,298;1336,255,298;1348,250,272;1354,233,262;1366,198,260;1372,218,283;1378,207,260;1384,215,342;1390,307,395;1402,335,392;1408,378,432;1414,335,402;1420,330,410;1426,400,437;1438,398,430;1444,402,433;1450,385,443"
  },
  {
    id: "eurusd",
    view: [804, 131],
    plot: { left: 807, top: 134, right: 1306, bottom: 320 },
    header: "EURUSD,H1  1.22938 1.22976 1.22875 1.22935",
    prices: ["1.25380", "1.24700", "1.24020", "1.23360", "1.22680", "1.22020"],
    firstPrice: 152,
    last: ["1.22935", 272],
    dates: ["9 Feb 2018", "13 Feb 00:00", "14 Feb 08:00", "15 Feb 16:00", "19 Feb 00:00", "20 Feb 08:00", "21 Feb 16:00", "23 Feb 00:00"],
    from: [795, 95],
    unit: [2.746, 3],
    points: "35,555,600;40,572,615;46,600,635;51,628,662;57,615,655;62,617,635;68,603,637;79,590,610;84,590,605;90,572,597;95,550,583;106,545,567;111,525,550;117,530,557;128,530,570;134,545,580;145,555,580;156,560,577;161,568,620;167,573,615;172,548,600;178,547,580;188,540,560;194,533,555;205,525,545;216,515,542;221,520,545;232,527,543;243,515,535;249,497,525;254,485,510;260,468,508;265,465,500;271,472,508;276,448,507;282,447,467;287,438,470;293,455,485;298,420,460;304,420,450;315,420,450;320,430,458;331,428,458;342,440,455;353,430,450;358,430,452;364,402,440;370,385,412;380,395,418;386,405,428;392,395,430;397,393,435;402,422,450;413,435,460;418,447,455;424,448,560;430,478,535;435,363,490;441,350,398;446,345,397;452,312,355;457,312,345;463,280,325;474,280,305;485,270,305;490,265,298;501,275,297;512,270,297;523,210,278;528,222,260;534,225,252;545,243,285;550,247,287;556,230,285;561,220,270;567,235,250;572,238,272;578,250,295;583,232,272;589,213,245;600,215,235;611,215,235;622,205,232;627,160,220;633,163,190;638,147,180;644,148,170;650,150,187;660,170,192;666,165,190;672,183,250;677,240,262;682,250,285;688,265,300;694,293,335;699,285,325;704,285,312;710,305,330;715,312,360;721,345,387;726,350,372;737,345,372;742,342,360;753,322,345;764,335,352;775,345,367;786,343,395;792,345,387;797,345,377;808,333,360;814,345,368;819,358,418;825,375,422;830,372,412;836,357,380;841,350,370;852,357,372;863,362,372;874,357,372;885,365,392;890,380,405;896,380,410;907,377,405;912,385,412;918,387,437;923,410,455;929,425,462;934,432,473;945,445,475;951,435,493;956,430,482;962,445,470;967,448,485;973,435,465;984,455,475;1000,463,473;1006,465,483;1017,457,473;1028,470,495;1039,480,507;1044,472,490;1050,465,512;1056,475,513;1061,470,513;1066,470,490;1072,475,515;1077,485,525;1083,475,523;1088,468,503;1094,472,517;1099,490,518;1110,480,500;1116,432,525;1121,520,545;1126,522,550;1132,540,562;1143,548,577;1154,545,562;1165,550,568;1170,547,562;1176,545,587;1181,553,585;1187,540,575;1192,530,560;1198,522,547;1203,520,545;1209,510,570;1214,497,577;1220,480,517;1225,443,495;1231,470,503;1236,460,480;1242,457,492;1253,470,495;1264,470,490;1275,470,495;1286,485,510;1297,507,530;1308,512,543;1314,515,555;1319,488,530;1330,490,520;1336,512,540;1341,500,530;1347,512,537;1352,520,542;1357,495,535;1363,520,547;1368,510,530;1374,518,540;1385,515,535;1390,525,543"
  },
  {
    id: "usdjpy",
    view: [261, 384],
    plot: { left: 261, top: 387, right: 742, bottom: 581 },
    header: "USDJPY,H1  106.875 106.932 106.759 106.878",
    prices: ["108.585", "107.970", "107.340", "106.725", "106.110", "105.495"],
    firstPrice: 413,
    last: ["106.878", 504],
    dates: ["9 Feb 2018", "13 Feb 09:00", "14 Feb 17:00", "16 Feb 01:00", "19 Feb 09:00", "20 Feb 17:00", "22 Feb 01:00", "23 Feb 09:00"],
    from: [340, 350],
    unit: [3, 3],
    points: "10,330,362;28,322,345;34,312,340;46,308,328;52,310,325;58,300,325;64,318,345;70,333,420;76,412,470;82,418,474;88,402,432;94,402,425;100,362,418;106,372,402;112,360,390;124,365,385;130,380,410;136,355,440;142,370,445;148,383,492;154,437,485;160,420,450;166,430,475;172,422,462;178,417,455;184,437,460;196,447,540;202,475,520;208,463,528;214,487,557;220,500,540;226,507,552;232,503,525;238,515,552;244,523,582;256,533,563;262,510,547;268,487,517;274,477,515;280,490,525;286,507,552;292,535,573;298,537,570;304,467,552;310,487,543;316,537,572;322,557,602;334,572,600;340,560,600;346,557,600;352,547,590;358,570,603;364,570,592;370,588,682;376,632,660;382,630,657;388,597,647;394,600,648;400,600,635;406,588,615;412,570,603;418,548,587;424,555,583;430,543,585;436,553,620;442,575,612;448,562,600;454,562,600;460,540,570;472,553,575;478,545,567;484,550,585;490,548,575;496,553,590;502,565,590;508,545,578;520,520,550;526,507,537;532,502,535;544,497,520;550,508,530;562,515,532;568,485,525;580,495,527;592,510,523;604,512,525;616,507,517;628,487,513;634,477,503;646,477,502;652,465,492;664,468,490;676,440,473;682,420,452;688,410,435;700,412,440;706,417,442;712,385,430;718,402,435;724,410,438;730,390,430;742,390,413;754,393,412;766,387,407;778,350,400;784,335,370;790,308,360;796,300,340;802,307,345;808,307,340;814,312,343;820,302,342;826,315,370;832,353,377;838,355,390;844,357,392;850,345,377;856,347,372;862,355,392;868,328,375;874,325,355;886,325,350;892,322,402;898,300,345;904,317,342;910,322,347;916,322,370;922,322,375;928,358,422;940,370,403;946,368,403;958,358,385;964,345,380;970,363,402;976,382,410;988,382,405;994,383,440;1000,422,467;1006,448,475;1012,460,515;1018,430,482;1024,440,475;1030,468,492;1036,475,510;1042,487,512;1054,480,500;1060,472,505;1066,443,487;1072,455,485;1084,458,477;1096,440,463;1102,422,460;1108,415,460;1114,440,480;1126,455,478;1138,470,497;1150,460,487;1156,477,523;1162,487,515;1174,500,515;1180,487,510;1192,453,485"
  },
  {
    id: "audusd",
    view: [806, 383],
    plot: { left: 809, top: 385, right: 1305, bottom: 579 },
    header: "AUDUSD,H1  0.78327 0.78445 0.78300 0.78430",
    prices: ["0.79680", "0.79280", "0.78880", "0.78490", "0.78090", "0.77690"],
    firstPrice: 411,
    last: ["0.78430", 515],
    dates: ["9 Feb 2018", "13 Feb 02:00", "14 Feb 10:00", "15 Feb 18:00", "19 Feb 02:00", "20 Feb 10:00", "21 Feb 18:00", "23 Feb 02:00"],
    from: [795, 345],
    unit: [2.746, 3],
    points: "40,570,628;45,597,682;51,633,686;57,622,657;62,597,662;68,570,622;73,570,600;84,567,580;90,543,578;101,533,557;106,520,550;117,525,550;122,545,590;128,557,598;139,550,575;145,523,550;156,520,550;161,505,553;167,505,563;172,530,567;178,513,540;194,487,517;200,460,505;210,460,485;216,467,500;221,457,492;232,435,467;243,437,468;254,458,490;260,430,487;265,432,460;276,437,480;287,465,495;293,490,550;298,465,523;304,468,490;315,472,490;326,460,483;336,470,490;347,450,483;353,450,475;358,427,487;364,397,435;370,400,430;380,407,432;386,420,447;392,430,462;397,445,472;413,445,472;418,453,686;424,573,665;429,400,612;435,402,450;440,378,443;446,327,385;457,288,355;462,285,320;468,300,332;474,293,335;479,280,358;484,255,310;490,273,300;496,287,330;501,265,297;512,247,282;518,205,262;523,205,240;534,237,265;540,255,322;550,293,325;556,278,330;561,275,383;567,333,393;572,333,383;583,280,317;594,260,285;600,252,282;605,248,278;616,263,290;622,232,275;627,222,255;638,187,210;644,170,200;650,177,207;655,150,205;660,153,185;666,163,235;672,210,250;682,250,315;688,298,345;694,320,365;699,270,320;704,303,345;710,317,375;715,350,388;721,337,370;732,347,357;742,330,352;748,290,330;753,282,300;764,303,333;770,308,333;781,308,352;786,297,328;797,300,325;803,290,318;808,293,340;814,323,363;819,347,373;825,347,375;830,330,355;841,327,345;852,337,350;863,323,350;874,320,347;880,328,398;885,350,382;896,285,355;901,298,328;912,298,333;918,312,360;923,340,390;929,378,420;934,363,405;940,353,393;950,393,420;956,363,418;962,348,390;967,348,383;973,373,405;984,405,435;995,410,425;1006,365,433;1012,403,443;1017,418,465;1022,455,487;1033,487,502;1044,460,517;1050,475,518;1061,465,490;1072,477,517;1077,490,522;1083,468,515;1094,497,547;1099,513,543;1105,515,545;1110,420,572;1116,565,607;1121,592,612;1127,607,630;1132,603,628;1143,610,643;1154,617,632;1165,587,613;1170,585,615;1181,598,632;1187,568,607;1192,557,592;1203,563,583;1209,532,583;1214,515,545;1220,468,517;1225,475,507;1236,487,508;1247,502,525;1258,500,525;1264,505,527;1275,517,550;1286,540,570;1292,545,572;1297,557,578;1308,550,580;1319,545,575;1330,567,595;1336,533,572;1341,545,592;1347,562,612;1352,565,597;1357,543,592;1363,532,552;1374,530,550;1380,517,545;1385,505,543"
  }
];

function text(x, y, value, cls) {
  return `<text x="${x}" y="${y}" xml:space="preserve" class="${cls || ""}">${value}</text>`;
}

function bars(chart) {
  const pts = chart.points.split(";").map((row) => {
    const [x, high, low] = row.split(",").map(Number);
    return [
      Math.floor(chart.from[0] + x / chart.unit[0]),
      chart.from[1] + high / chart.unit[1],
      chart.from[1] + low / chart.unit[1]
    ];
  });
  let path = "";
  let k = 0;
  for (let x = pts[0][0]; x <= pts[pts.length - 1][0]; x += 2) {
    while (k < pts.length - 2 && pts[k + 1][0] <= x) k++;
    const a = pts[k];
    const b = pts[k + 1];
    const t = Math.max(0, Math.min(1, (x - a[0]) / (b[0] - a[0])));
    // snap to a known bar when one is close enough
    const s = t < 0.35 ? 0 : t > 0.65 ? 1 : t;
    const high = Math.round(a[1] + (b[1] - a[1]) * s);
    const low = Math.round(a[2] + (b[2] - a[2]) * s);
    path += `M${x + 0.5} ${high}V${low + 1}`;
  }
  return path;
}

function draw(chart) {
  const { left, top, right, bottom } = chart.plot;
  let grid = "";
  let ticks = "";
  let labels = "";
  for (let x = left + 32; x < right; x += 32) {
    grid += `M${x + 0.5} ${top}V${bottom}`;
  }
  chart.prices.forEach((price, i) => {
    const y = chart.firstPrice + i * 33;
    grid += `M${left} ${y + 0.5}H${right}`;
    ticks += `M${right} ${y + 0.5}h3`;
    labels += text(right + 6, y + 4, price);
  });
  chart.dates.forEach((date, i) => {
    const x = left + i * 64;
    ticks += `M${x + 0.5} ${bottom}v4`;
    labels += text(x - 1, bottom + 13, date);
  });
  const [price, y] = chart.last;
  document.getElementById(chart.id).innerHTML = `
    <g transform="translate(${-chart.view[0]} ${-chart.view[1]})" fill="none">
      <path d="${grid}" stroke="#778899" stroke-dasharray="3 3"/>
      <path d="M${left} ${y + 0.5}H${right}" stroke="#778899"/>
      <path d="${bars(chart)}" stroke="#00ff00"/>
      <path d="M${left - 0.5} ${top + 0.5}H${right + 0.5}V${bottom + 0.5}H${left - 0.5}Z" stroke="#fff"/>
      <path d="${ticks}" stroke="#fff"/>
      ${labels}
      <rect x="${right + 2}" y="${y - 5}" width="60" height="11" fill="#fff"/>
      ${text(right + 6, y + 4, price, "tag")}
      ${text(left + 4, top + 11, chart.header)}
    </g>`;
}

charts.forEach(draw);
```
